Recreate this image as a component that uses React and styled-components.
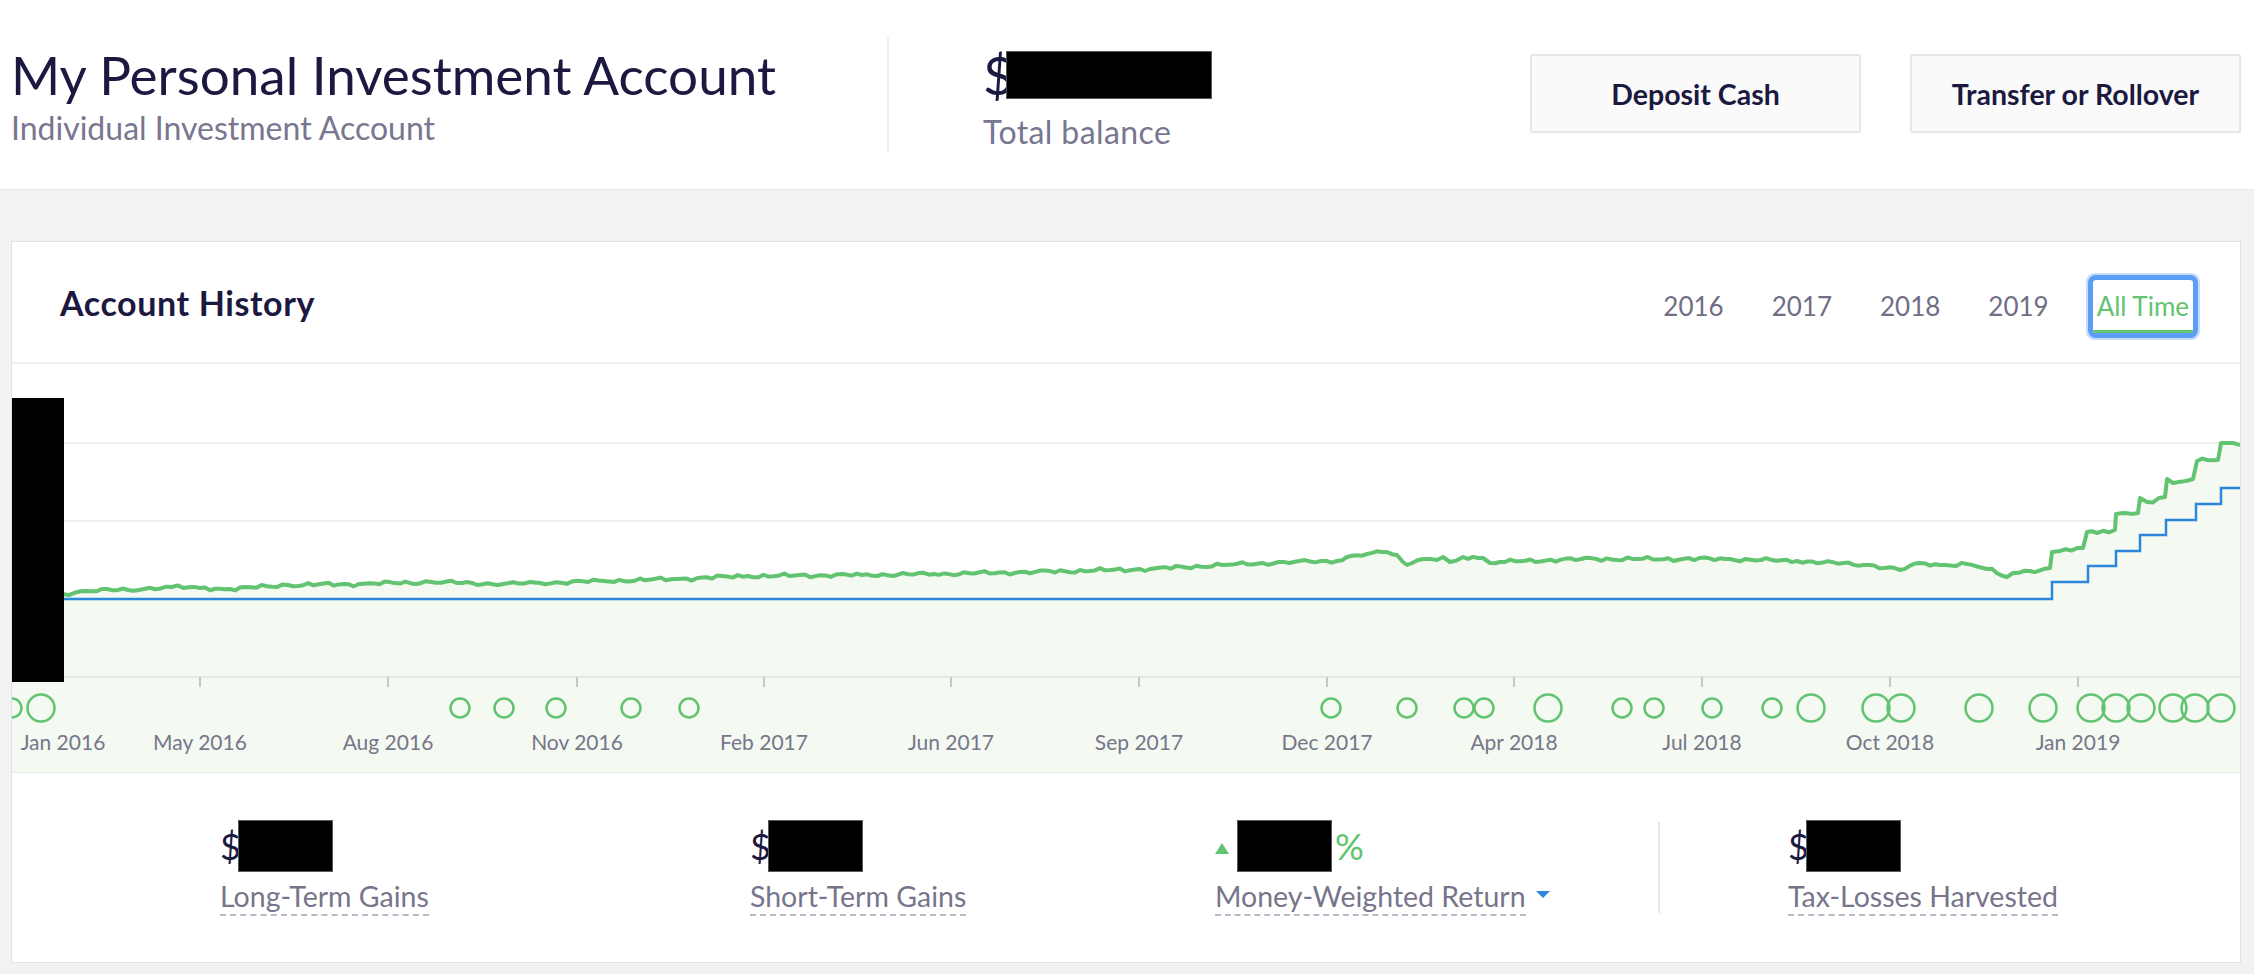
import React from 'react';
import styled, { createGlobalStyle } from 'styled-components';

const GlobalStyle = createGlobalStyle`
  body {
    margin: 0;
    background: #f2f2f2;
    font-family: Lato, "Liberation Sans", sans-serif;
  }
`;

const Header = styled.header`
  display: flex;
  align-items: flex-start;
  height: 190px;
  box-sizing: border-box;
  padding: 0 13px 0 11px;
  background: #fff;
  border-bottom: 1px solid #e6e6e6;
`;

const TitleBlock = styled.div`
  width: 876px;
  margin-top: 45px;
`;

const Title = styled.h1`
  margin: 0;
  font-size: 53px;
  line-height: 60px;
  font-weight: 400;
  color: #1b1940;
`;

const Subtitle = styled.div`
  margin-top: 3px;
  font-size: 32px;
  line-height: 40px;
  color: #787690;
`;

const HeaderDivider = styled.div`
  width: 2px;
  height: 115px;
  margin-top: 38px;
  background: #ececec;
`;

const Balance = styled.div`
  margin-left: 94px;
  margin-top: 45px;
`;

const BalanceValue = styled.div`
  display: flex;
  align-items: center;
  font-size: 53px;
  line-height: 60px;
  color: #1b1940;
`;

const Redacted = styled.span`
  display: inline-block;
  width: ${p => p.$w}px;
  height: ${p => p.$h}px;
  margin-left: ${p => p.$ml || 0}px;
  background: #000;
  border: 1px solid #5a5a5a;
  box-sizing: border-box;
`;

const BalanceLabel = styled.div`
  margin-top: 7px;
  font-size: 32px;
  line-height: 40px;
  letter-spacing: 0.4px;
  color: #787690;
`;

const Actions = styled.div`
  display: flex;
  gap: 49px;
  margin-left: auto;
  margin-top: 54px;
`;

const ActionButton = styled.button`
  width: 331px;
  height: 79px;
  background: #fafafa;
  border: 2px solid #e6e6e6;
  border-radius: 2px;
  font-family: Lato, "Liberation Sans", sans-serif;
  font-size: 28.5px;
  font-weight: 700;
  color: #1b1940;
  cursor: pointer;
`;

const Card = styled.section`
  margin: 51px 13px 11px 11px;
  background: #fff;
  border: 1px solid #e3e3e3;
`;

const CardHeader = styled.div`
  display: flex;
  align-items: flex-start;
  height: 122px;
  box-sizing: border-box;
  padding: 38px 47px 0 48px;
  border-bottom: 2px solid #efefef;
`;

const CardTitle = styled.h2`
  margin: 3px 0 0;
  font-size: 34px;
  line-height: 40px;
  letter-spacing: 0.6px;
  font-weight: 700;
  color: #1b1940;
`;

const Tabs = styled.div`
  display: flex;
  gap: 40px;
  margin-left: auto;
`;

const Tab = styled.button`
  padding: 11px 4px 9px;
  background: none;
  border: none;
  border-bottom: 3px solid ${p => (p.$active ? '#62c370' : 'transparent')};
  border-radius: 3px;
  font-family: Lato, "Liberation Sans", sans-serif;
  font-size: 26px;
  line-height: 30px;
  color: ${p => (p.$active ? '#62c370' : '#6f6e84')};
  box-shadow: ${p =>
    p.$active ? '0 0 0 5px #5c9ef4, 0 0 0 7px rgba(92,158,244,0.35)' : 'none'};
  cursor: pointer;
`;

const ChartWrap = styled.div`
  border-bottom: 1px solid #e6e9e4;
  svg {
    display: block;
  }
`;

const Stats = styled.div`
  display: grid;
  grid-template-columns: 530px 465px 443px 130px 1fr;
  align-items: center;
  height: 189px;
  box-sizing: border-box;
  padding-left: 208px;
`;

const Stat = styled.div`
  display: flex;
  flex-direction: column;
  align-items: flex-start;
`;

const StatValue = styled.div`
  display: flex;
  align-items: center;
  height: 53px;
  font-size: 36px;
  color: ${p => p.$color || '#1b1940'};
`;

const Percent = styled.span`
  margin-left: 3px;
`;

const StatLabelRow = styled.div`
  display: flex;
  align-items: center;
  margin-top: 7px;
`;

const StatLabel = styled.span`
  font-size: 28.5px;
  line-height: 32px;
  padding-bottom: 2px;
  color: #76758b;
  border-bottom: 2px dashed #b9b8c6;
`;

const StatDivider = styled.div`
  width: 2px;
  height: 91px;
  background: #e6e6e6;
`;

const Caret = styled.span`
  width: 0;
  height: 0;
  margin-left: 10px;
  margin-bottom: 6px;
  border-left: 7px solid transparent;
  border-right: 7px solid transparent;
  border-top: 7px solid #2a87dc;
`;

const UpArrow = styled.span`
  width: 0;
  height: 0;
  margin-right: 8px;
  margin-top: 4px;
  border-left: 7px solid transparent;
  border-right: 7px solid transparent;
  border-bottom: 11px solid #62c370;
`;

const GREEN = [
  [63, 594], [86, 591], [144, 589], [172, 587], [200, 588], [230, 589], [288, 585],
  [359, 584], [431, 582], [503, 584], [540, 583], [604, 581], [676, 579], [748, 576],
  [862, 575], [934, 574], [1035, 572], [1150, 569], [1222, 565], [1294, 562],
  [1337, 561], [1347, 557], [1367, 554], [1387, 552], [1397, 555], [1403, 562],
  [1407, 565], [1412, 563], [1423, 559], [1437, 560], [1443, 557], [1450, 562],
  [1463, 557], [1483, 558], [1490, 563], [1500, 562], [1581, 559], [1725, 559],
  [1797, 561], [1869, 565], [1900, 570], [1920, 563], [1940, 565], [1967, 564],
  [1987, 569], [2007, 577], [2013, 573], [2030, 571], [2050, 568], [2052, 552],
  [2060, 551], [2083, 548], [2087, 532], [2097, 533], [2115, 530], [2116, 514],
  [2138, 513], [2140, 498], [2147, 502], [2165, 497], [2167, 479], [2173, 483],
  [2193, 479], [2197, 461], [2218, 460], [2221, 443], [2233, 443], [2240, 445],
];

function buildLine() {
  const pts = [];
  let n = 0;
  for (let i = 0; i < GREEN.length - 1; i++) {
    const [x0, y0] = GREEN[i];
    const [x1, y1] = GREEN[i + 1];
    pts.push([x0, y0]);
    const dx = x1 - x0;
    if (dx > 8) {
      const steps = Math.floor(dx / 5);
      for (let s = 1; s < steps; s++) {
        const t = s / steps;
        n++;
        const noise = 1.1 * Math.sin(n * 1.7) + 0.7 * Math.sin(n * 0.53 + 1) + 0.5 * Math.sin(n * 3.1);
        pts.push([x0 + dx * t, y0 + (y1 - y0) * t + noise]);
      }
    }
  }
  pts.push(GREEN[GREEN.length - 1]);
  return pts;
}

const LINE = buildLine();
const linePath = LINE.map((p, i) => `${i ? 'L' : 'M'}${p[0].toFixed(1)} ${p[1].toFixed(1)}`).join(' ');
const areaPath = `${linePath} L2240 677 L63 677 Z`;
const bluePath = 'M63 599 H2052 V582 H2088 V566 H2116 V551 H2140 V535 H2166 V520 H2196 V504 H2221 V488 H2240';

const TICKS = [200, 388, 577, 764, 951, 1139, 1327, 1514, 1702, 1890, 2078];
const LABELS = [
  [63, 'Jan 2016'], [200, 'May 2016'], [388, 'Aug 2016'], [577, 'Nov 2016'], [764, 'Feb 2017'],
  [951, 'Jun 2017'], [1139, 'Sep 2017'], [1327, 'Dec 2017'], [1514, 'Apr 2018'], [1702, 'Jul 2018'],
  [1890, 'Oct 2018'], [2078, 'Jan 2019'],
];
const SMALL = [12, 460, 504, 556, 631, 689, 1331, 1407, 1464, 1484, 1622, 1654, 1712, 1772];
const BIG = [41, 1548, 1811, 1876, 1901, 1979, 2043, 2091, 2116, 2141, 2173, 2195, 2221];

function HistoryChart() {
  return (
    <svg width="2228" height="408" viewBox="12 364 2228 408">
      <rect x="12" y="364" width="2228" height="408" fill="#fff" />
      {[443, 521, 599].map(y => (
        <line key={y} x1="12" x2="2240" y1={y} y2={y} stroke="#efefef" strokeWidth="2" />
      ))}
      <path d={areaPath} fill="#f4f9f1" />
      <rect x="12" y="677" width="2228" height="95" fill="#f4f9f1" />
      <line x1="12" x2="2240" y1="677" y2="677" stroke="#e6e9e4" strokeWidth="2" />
      {TICKS.map(x => (
        <line key={x} x1={x} x2={x} y1="677" y2="687" stroke="#c9c9c9" strokeWidth="2" />
      ))}
      <path d={bluePath} fill="none" stroke="#2a87dc" strokeWidth="2.5" />
      <path d={linePath} fill="none" stroke="#62c370" strokeWidth="4" strokeLinejoin="round" />
      {SMALL.map(x => (
        <circle key={'s' + x} cx={x} cy="708" r="9.5" fill="none" stroke="#62c370" strokeWidth="2.5" />
      ))}
      {BIG.map(x => (
        <circle key={'b' + x} cx={x} cy="708" r="13.5" fill="none" stroke="#62c370" strokeWidth="2.5" />
      ))}
      {LABELS.map(([x, t]) => (
        <text key={t} x={x} y="750" textAnchor="middle" fontFamily="Lato, 'Liberation Sans', sans-serif" fontSize="21" fill="#77768a">
          {t}
        </text>
      ))}
      <rect x="12" y="398" width="52" height="284" fill="#000" />
    </svg>
  );
}

export default function App() {
  const years = ['2016', '2017', '2018', '2019'];
  return (
    <>
      <GlobalStyle />
      <Header>
        <TitleBlock>
          <Title>My Personal Investment Account</Title>
          <Subtitle>Individual Investment Account</Subtitle>
        </TitleBlock>
        <HeaderDivider />
        <Balance>
          <BalanceValue>
            $<Redacted $w={206} $h={48} $ml={-8} />
          </BalanceValue>
          <BalanceLabel>Total balance</BalanceLabel>
        </Balance>
        <Actions>
          <ActionButton>Deposit Cash</ActionButton>
          <ActionButton>Transfer or Rollover</ActionButton>
        </Actions>
      </Header>
      <Card>
        <CardHeader>
          <CardTitle>Account History</CardTitle>
          <Tabs>
            {years.map(y => (
              <Tab key={y}>{y}</Tab>
            ))}
            <Tab $active>All Time</Tab>
          </Tabs>
        </CardHeader>
        <ChartWrap>
          <HistoryChart />
        </ChartWrap>
        <Stats>
          <Stat>
            <StatValue>
              $<Redacted $w={95} $h={52} $ml={-3} />
            </StatValue>
            <StatLabelRow>
              <StatLabel>Long-Term Gains</StatLabel>
            </StatLabelRow>
          </Stat>
          <Stat>
            <StatValue>
              $<Redacted $w={95} $h={52} $ml={-3} />
            </StatValue>
            <StatLabelRow>
              <StatLabel>Short-Term Gains</StatLabel>
            </StatLabelRow>
          </Stat>
          <Stat>
            <StatValue $color="#62c370">
              <UpArrow />
              <Redacted $w={95} $h={52} />
              <Percent>%</Percent>
            </StatValue>
            <StatLabelRow>
              <StatLabel>Money-Weighted Return</StatLabel>
              <Caret />
            </StatLabelRow>
          </Stat>
          <StatDivider />
          <Stat>
            <StatValue>
              $<Redacted $w={95} $h={52} $ml={-3} />
            </StatValue>
            <StatLabelRow>
              <StatLabel>Tax-Losses Harvested</StatLabel>
            </StatLabelRow>
          </Stat>
        </Stats>
      </Card>
    </>
  );
}
